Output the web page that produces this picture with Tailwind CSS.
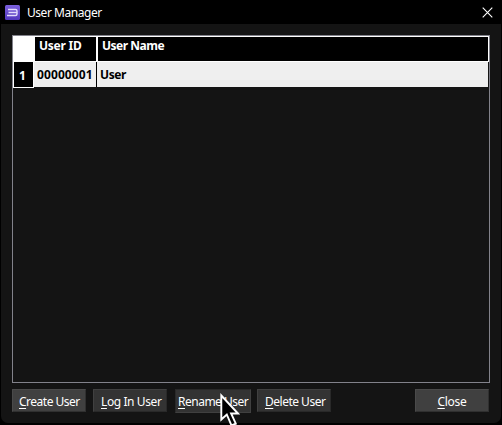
<!DOCTYPE html>
<html lang="en">
<head>
<meta charset="utf-8">
<title>User Manager</title>
<script src="https://cdn.jsdelivr.net/npm/@tailwindcss/browser@4"></script>
</head>
<body class="bg-black">
<main class="relative flex h-[425px] w-[502px] flex-col overflow-hidden bg-black pl-px pr-px font-['Noto_Sans','Open_Sans',sans-serif] text-[12px] leading-4 text-white">
  <header class="flex h-6 shrink-0 items-center pl-1 pr-2">
    <svg class="h-[15px] w-[15px]" viewBox="0 0 15 15" fill="none">
      <defs><linearGradient id="g" x1="0" y1="0" x2="0" y2="1"><stop stop-color="#7b60dc"/><stop offset="1" stop-color="#5237bd"/></linearGradient></defs>
      <rect width="15" height="15" rx="1.5" fill="url(#g)"/>
      <path d="M3 4.5h7.500q1.500 0 1.500 1.500v3q0 1.500-1.500 1.500H2M3.500 7.500H12" stroke="#e2dbfb" stroke-width="1.400"/>
    </svg>
    <h1 class="ml-[7px] whitespace-nowrap pt-0.5 tracking-[-0.45px]">User Manager</h1>
    <svg class="ml-auto h-[11px] w-[11px]" viewBox="0 0 11 11"><path d="M.7.7l9.600 9.600M10.300.7L.7 10.300" stroke="#fff" stroke-width="1.100"/></svg>
  </header>
  <section class="flex h-[399px] flex-col rounded-b-[7px] bg-[#141414] pl-[11px] pr-[11px] pt-[11px]">
    <div class="h-[348px] w-[478px] border border-[#82828b] font-bold">
      <div class="flex h-[26px] bg-white pb-px pr-px pt-px">
        <div class="w-[22px]"></div>
        <div class="w-[61px] bg-black pl-1 pt-px tracking-[-0.25px]">User ID</div>
        <div class="ml-0.5 flex-1 bg-black pl-1 pt-px tracking-[-0.5px]">User Name</div>
      </div>
      <div class="flex h-[26px] pr-px">
        <div class="flex w-[21px] items-center border-b border-l border-r border-white bg-black pl-[5px] pt-0.5">1</div>
        <div class="flex h-[25px] w-[62px] items-center whitespace-nowrap bg-[#efefef] pl-[3px] tracking-[0.1px] text-black">00000001</div>
        <div class="flex h-[25px] flex-1 items-center border-l border-black bg-[#efefef] pl-[3px] tracking-[-0.4px] text-black">User</div>
      </div>
    </div>
    <footer class="mt-1.5 flex whitespace-nowrap pr-px tracking-[-0.5px]">
      <button class="flex h-[23px] w-[74px] items-center justify-start border border-[#303030] border-l-[#4a4a4a] border-t-[#4a4a4a] bg-[#404040] pl-1.5 pt-0.5"><span class="underline underline-offset-2">C</span>reate User</button>
      <button class="ml-[7px] flex h-[23px] w-[74px] items-center justify-start border border-[#292929] border-l-[#404040] border-t-[#404040] bg-[#333333] pl-[7px] pt-0.5 tracking-[-0.4px]"><span class="underline underline-offset-2">L</span>og In User</button>
      <button class="ml-2 flex h-6 w-[76px] items-center justify-start border border-[#404040] border-l-[#292929] border-t-[#292929] bg-[#333333] pl-[2px] pt-px"><span class="underline underline-offset-2">R</span>ename User</button>
      <button class="ml-1.5 flex h-[23px] w-[74px] items-center justify-start border border-[#292929] border-l-[#404040] border-t-[#404040] bg-[#333333] pl-[7px] pt-0.5"><span class="underline underline-offset-2">D</span>elete User</button>
      <button class="ml-auto flex h-[23px] w-[74px] items-center justify-center border border-[#303030] border-l-[#4a4a4a] border-t-[#4a4a4a] bg-[#404040] pt-0.5 tracking-[-0.3px]"><span class="underline underline-offset-2">C</span>lose</button>
    </footer>
  </section>
  <svg class="absolute left-[220px] top-[393px] h-8 w-5" viewBox="0 0 20 32"><path d="M1.300 2.500V26.500l5.500-5 4.700 11 4.300-1.800-4.700-10.200H18Z" fill="#000" stroke="#fff" stroke-width="1.900"/></svg>
</main>
</body>
</html>
